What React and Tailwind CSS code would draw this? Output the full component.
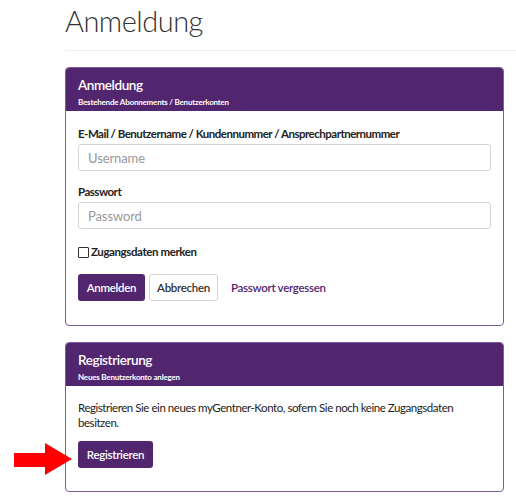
import React from 'react';

const purple = 'bg-[#52266f]';

function CardHeader({ title, subtitle }) {
  return (
    <div className="h-[43px] bg-[#52266f] px-3 pt-[8px] text-white">
      <div className="text-[13.5px] font-semibold leading-[18px] tracking-[-0.4px]">{title}</div>
      <div className="mt-[3px] text-[8px] font-bold leading-[10px] tracking-[-0.2px]">{subtitle}</div>
    </div>
  );
}

function Field({ label, placeholder, type = 'text', className = '' }) {
  return (
    <div className={className}>
      <label className="block text-[11.5px] font-bold leading-[18px] tracking-[-0.5px] text-[#222]">{label}</label>
      <input
        type={type}
        placeholder={placeholder}
        className="mt-[1px] block h-[27px] w-full rounded-[3px] border border-[#d4d4d4] px-[9px] text-[13px] tracking-[-0.1px] text-[#333] placeholder:text-[#999] outline-none"
      />
    </div>
  );
}

export default function App() {
  return (
    <div className="relative min-h-screen bg-white pl-[65px] font-['Lato',sans-serif] text-[#333]">
      <h1 className="h-[51px] border-b border-[#eeeeee] pt-[1px] text-[29px] font-light leading-[40px] tracking-[-0.5px] text-[#333]">
        Anmeldung
      </h1>

      <div className="mr-[12px] mt-[16px] overflow-hidden rounded-[4px] border border-[#7d5c97]">
        <CardHeader title="Anmeldung" subtitle="Bestehende Abonnements / Benutzerkonten" />
        <div className="px-3 pb-[24px] pt-[14px]">
          <Field label="E-Mail / Benutzername / Kundennummer / Ansprechpartnernummer" placeholder="Username" />
          <Field label="Passwort" placeholder="Password" type="password" className="mt-[12px]" />

          <label className="mt-[14px] flex h-[18px] items-center gap-[2px] text-[11.5px] font-bold tracking-[-0.4px] text-[#222]">
            <span className="h-[11px] w-[11px] rounded-[1px] border border-[#333] bg-white" />
            Zugangsdaten merken
          </label>

          <div className="mt-[13px] flex items-center">
            <button className={`h-[27px] w-[67px] rounded-[3px] ${purple} text-[11.5px] font-semibold tracking-[-0.3px] text-white`}>
              Anmelden
            </button>
            <button className="ml-[4px] h-[27px] w-[69px] rounded-[3px] border border-[#d4d4d4] bg-white text-[11.5px] font-semibold tracking-[-0.3px] text-[#333]">
              Abbrechen
            </button>
            <a className="ml-[13px] text-[11.5px] font-semibold tracking-[-0.3px] text-[#52266f]">Passwort vergessen</a>
          </div>
        </div>
      </div>

      <div className="mr-[12px] mt-[16px] overflow-hidden rounded-[4px] border border-[#7d5c97]">
        <CardHeader title="Registrierung" subtitle="Neues Benutzerkonto anlegen" />
        <div className="px-3 pb-[23px] pt-[14px]">
          <p className="text-[11.5px] leading-[15px] tracking-[-0.45px] text-[#222]">
            Registrieren Sie ein neues myGentner-Konto, sofern Sie noch keine Zugangsdaten besitzen.
          </p>
          <button className={`mt-[11px] h-[27px] w-[75px] rounded-[3px] ${purple} text-[11.5px] font-semibold tracking-[-0.3px] text-white`}>
            Registrieren
          </button>
        </div>
      </div>

      {/* red annotation arrow */}
      <svg className="absolute left-[14px] top-[443px]" width="58" height="32" viewBox="0 0 58 32">
        <polygon points="0,10 31,10 31,0 58,16 31,32 31,24 0,24" fill="#ff0000" />
      </svg>
    </div>
  );
}
